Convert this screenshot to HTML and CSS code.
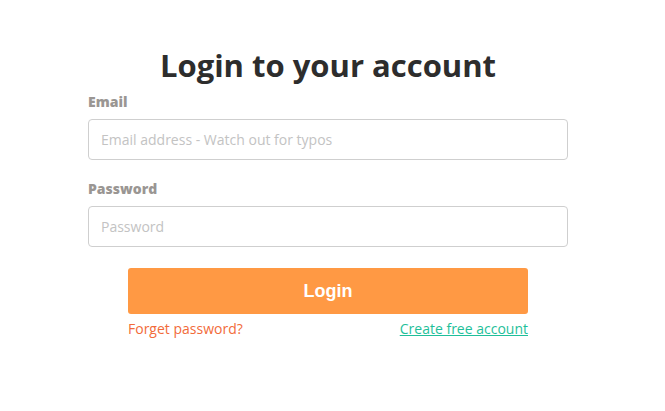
FILE: index.html
```html
<!DOCTYPE html>
<html>
<head>
<meta charset="utf-8">
<link rel="stylesheet" href="styles.css">
</head>
<body>
<div class="page">
  <form class="login">
    <h1 class="title">Login to your account</h1>
    <label class="label" for="email">Email</label>
    <input class="field" id="email" type="text" placeholder="Email address - Watch out for typos">
    <label class="label label-pw" for="pw">Password</label>
    <input class="field" id="pw" type="password" placeholder="Password">
    <div class="actions">
      <button class="btn" type="button">Login</button>
      <div class="links">
        <a class="forgot" href="#">Forget password?</a>
        <a class="create" href="#">Create free account</a>
      </div>
    </div>
  </form>
</div>
</body>
</html>
```
FILE: styles.css
```css
* { box-sizing: border-box; }
html, body { margin: 0; padding: 0; background: #fff; }
body { font-family: "Open Sans", "Liberation Sans", sans-serif; }
.page { padding: 43px 0 0 88px; }
.login { width: 480px; display: flex; flex-direction: column; }
.title {
  margin: 0 0 6px 0;
  text-align: center;
  font-size: 31px;
  font-weight: 700;
  color: #2d2d2d;
  line-height: 44px;
}
.label {
  font-size: 14px;
  font-weight: 800;
  color: #9a9693;
  line-height: 18px;
  margin-bottom: 8px;
}
.label-pw { margin-top: 20px; }
.field {
  width: 480px;
  height: 41px;
  border: 1px solid #cfcfcf;
  border-radius: 4px;
  padding: 0 12px;
  font-family: "Open Sans", sans-serif;
  font-size: 14px;
  color: #333;
  outline: none;
}
.field::placeholder { color: #c3c3c3; }
.actions { width: 400px; margin: 21px auto 0; display: flex; flex-direction: column; }
.btn {
  height: 46px;
  border: 0;
  border-radius: 3px;
  background: #ff9944;
  color: #fff;
  font-family: "Liberation Sans", Arial, sans-serif;
  font-weight: 700;
  font-size: 18px;
}
.links { display: flex; justify-content: space-between; margin-top: 5px; font-size: 14px; line-height: 20px; }
.forgot { color: #f26b3a; text-decoration: none; }
.create { color: #1fbf9a; text-decoration: underline; }
```
